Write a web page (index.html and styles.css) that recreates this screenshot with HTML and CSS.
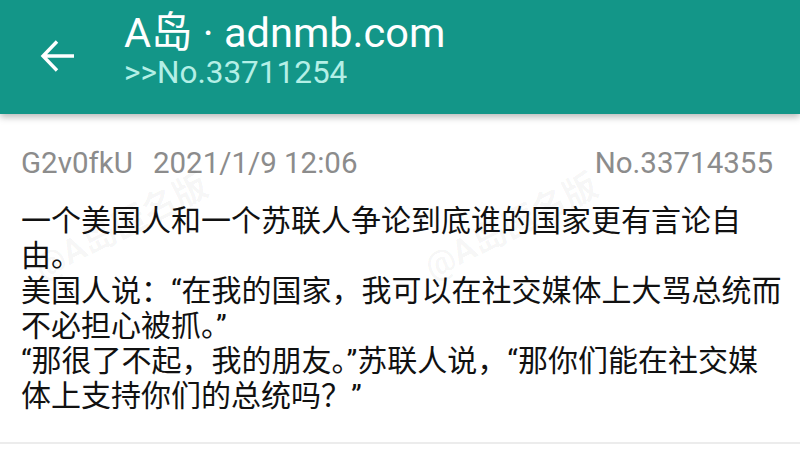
FILE: index.html
```html
<!DOCTYPE html>
<html lang="zh-CN">
<head>
<meta charset="utf-8">
<title>A岛 · adnmb.com</title>
<link rel="stylesheet" href="styles.css">
</head>
<body>
<header class="appbar">
  <div class="back">
    <svg width="36" height="36" viewBox="0 0 36 36" aria-hidden="true">
      <path d="M34 18 H3 M17 3.5 L3 18 L17 32.5" fill="none" stroke="#ffffff" stroke-width="3.4" stroke-linecap="butt" stroke-linejoin="miter"/>
    </svg>
  </div>
  <div class="titles">
    <div class="title">A岛 · adnmb.com</div>
    <div class="subtitle">&gt;&gt;No.33711254</div>
  </div>
</header>
<main class="thread">
  <article class="reply">
    <div class="meta">
      <span class="uid">G2v0fkU</span>
      <span class="time">2021/1/9 12:06</span>
      <span class="no">No.33714355</span>
    </div>
    <p class="content">一个美国人和一个苏联人争论到底谁的国家更有言论自由。<br>美国人说：“在我的国家，我可以在社交媒体上大骂总统而不必担心被抓。”<br>“那很了不起，我的朋友。”苏联人说，“那你们能在社交媒体上支持你们的总统吗？”</p>
    <span class="watermark wm1">@A岛匿名版</span>
    <span class="watermark wm2">@A岛匿名版</span>
  </article>
</main>
</body>
</html>
```
FILE: styles.css
```css
html, body {
  margin: 0;
  padding: 0;
}
body {
  width: 800px;
  height: 458px;
  overflow: hidden;
  background: #ffffff;
  font-family: "Roboto", "Noto Sans CJK SC", sans-serif;
}
.appbar {
  position: relative;
  z-index: 2;
  height: 114px;
  background: #139688;
  display: flex;
  box-shadow: 0 3px 7px rgba(0, 0, 0, 0.28);
}
.back {
  width: 84px;
  padding-left: 40px;
  display: flex;
  align-items: center;
}
.back svg {
  display: block;
  margin-top: -2px;
}
.titles {
  padding-top: 10px;
}
.title {
  color: #ffffff;
  font-size: 41.5px;
  line-height: 45px;
  white-space: nowrap;
}
.subtitle {
  color: #b4efe6;
  font-size: 31.5px;
  line-height: 36px;
}
.thread {
  background: #ffffff;
}
.reply {
  position: relative;
  padding: 32px 0 29px;
  border-bottom: 2px solid #ececec;
  overflow: hidden;
}
.meta {
  display: flex;
  padding: 0 27px 0 21px;
  font-size: 29.5px;
  line-height: 35px;
  color: #8c8c8c;
}
.time {
  margin-left: 20px;
}
.no {
  margin-left: auto;
}
.content {
  margin: 22px 0 0;
  padding: 0 16px 0 21px;
  font-size: 30px;
  line-height: 35px;
  color: #111111;
}
.watermark {
  position: absolute;
  font-size: 34px;
  font-weight: bold;
  color: rgba(0, 0, 0, 0.04);
  transform: rotate(-27deg);
  white-space: nowrap;
  pointer-events: none;
}
.wm1 {
  left: 25px;
  top: 85px;
}
.wm2 {
  left: 415px;
  top: 85px;
}
```
